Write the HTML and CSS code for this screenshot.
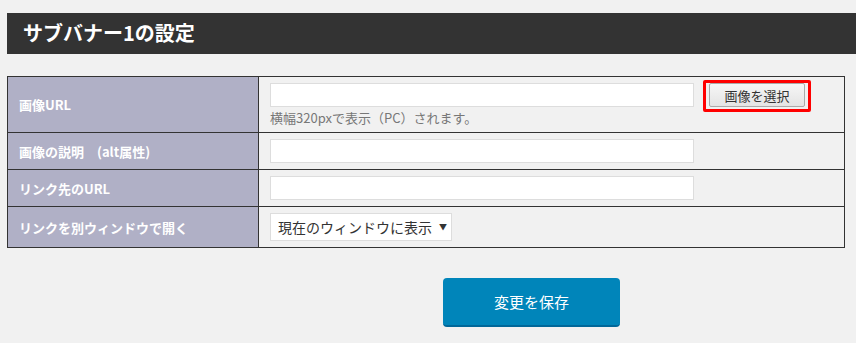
FILE: index.html
```html
<!DOCTYPE html>
<html lang="ja">
<head>
    <meta charset="UTF-8">
    <title>サブバナー1の設定</title>
    <link rel="stylesheet" href="styles.css">
</head>
<body>
    <div class="wrap">
        <h2 class="section-title">サブバナー1の設定</h2>

        <table class="form-table">
            <tr class="row-image">
                <th>画像URL</th>
                <td>
                    <div class="field-line">
                        <input type="text" class="text-field">
                        <span class="highlight"><button type="button" class="select-btn">画像を選択</button></span>
                    </div>
                    <p class="note">横幅320pxで表示（PC）されます。</p>
                </td>
            </tr>
            <tr>
                <th>画像の説明　(alt属性)</th>
                <td><input type="text" class="text-field"></td>
            </tr>
            <tr>
                <th>リンク先のURL</th>
                <td><input type="text" class="text-field"></td>
            </tr>
            <tr class="row-select">
                <th>リンクを別ウィンドウで開く</th>
                <td>
                    <div class="select-box">現在のウィンドウに表示<span class="caret">▼</span></div>
                </td>
            </tr>
        </table>

        <div class="actions">
            <button type="button" class="save-btn">変更を保存</button>
        </div>
    </div>
</body>
</html>
```

FILE: styles.css
```css
body {
    margin: 0;
    background-color: #f1f1f1;
    font-family: "Noto Sans CJK JP", "Noto Sans", sans-serif;
    color: #444;
}

.wrap {
    padding: 13px 11px 0 7px;
}

.section-title {
    margin: 0 -11px 0 0;
    height: 41px;
    line-height: 40px;
    padding-left: 16px;
    background-color: #333;
    color: #fff;
    font-size: 20px;
    font-weight: bold;
}

.form-table {
    margin-top: 22px;
    width: 100%;
    border-collapse: collapse;
}

.form-table th,
.form-table td {
    border: 1px solid #333;
    font-size: 13px;
}

.form-table th {
    width: 228px;
    padding: 0 11px;
    background-color: #b0b0c6;
    color: #fff;
    font-weight: bold;
    text-align: left;
    height: 36px;
}

.form-table td {
    padding: 0 0 0 11px;
}

.row-image th {
    height: 55px;
}

.row-image td {
    height: 49px;
    vertical-align: top;
    padding-top: 6px;
}

.row-select th,
.row-select td {
    height: 40px;
}

.field-line {
    display: flex;
    align-items: center;
    gap: 9px;
    height: 24px;
}

.text-field {
    box-sizing: border-box;
    width: 424px;
    height: 24px;
    margin: 0;
    border: 1px solid #ddd;
    background: #fff;
    display: block;
}

.highlight {
    display: inline-block;
    border: 3px solid #f00;
    border-radius: 2px;
    padding: 0 3px 2px 3px;
    margin-top: 2px;
}

.select-btn {
    display: block;
    width: 96px;
    height: 24px;
    padding: 0;
    border: 1px solid #aaa;
    border-radius: 2px;
    background: linear-gradient(#f6f6f6, #e4e4e4);
    font-family: inherit;
    font-size: 13px;
    color: #333;
}

.note {
    margin: 1px 0 0;
    color: #777;
    font-size: 13px;
    line-height: 20px;
}

.select-box {
    box-sizing: border-box;
    display: inline-block;
    width: 182px;
    height: 28px;
    line-height: 26px;
    padding-left: 7px;
    border: 1px solid #ddd;
    background: #fff;
    color: #333;
    font-size: 14px;
}

.caret {
    font-size: 8px;
    margin-left: 7px;
    vertical-align: 3px;
}

.actions {
    display: flex;
    padding: 30px 0 0 436px;
}

.save-btn {
    width: 177px;
    height: 49px;
    border: none;
    border-bottom: 2px solid #006799;
    border-radius: 4px;
    background-color: #0085ba;
    color: #fff;
    font-family: inherit;
    font-size: 15px;
}
```
